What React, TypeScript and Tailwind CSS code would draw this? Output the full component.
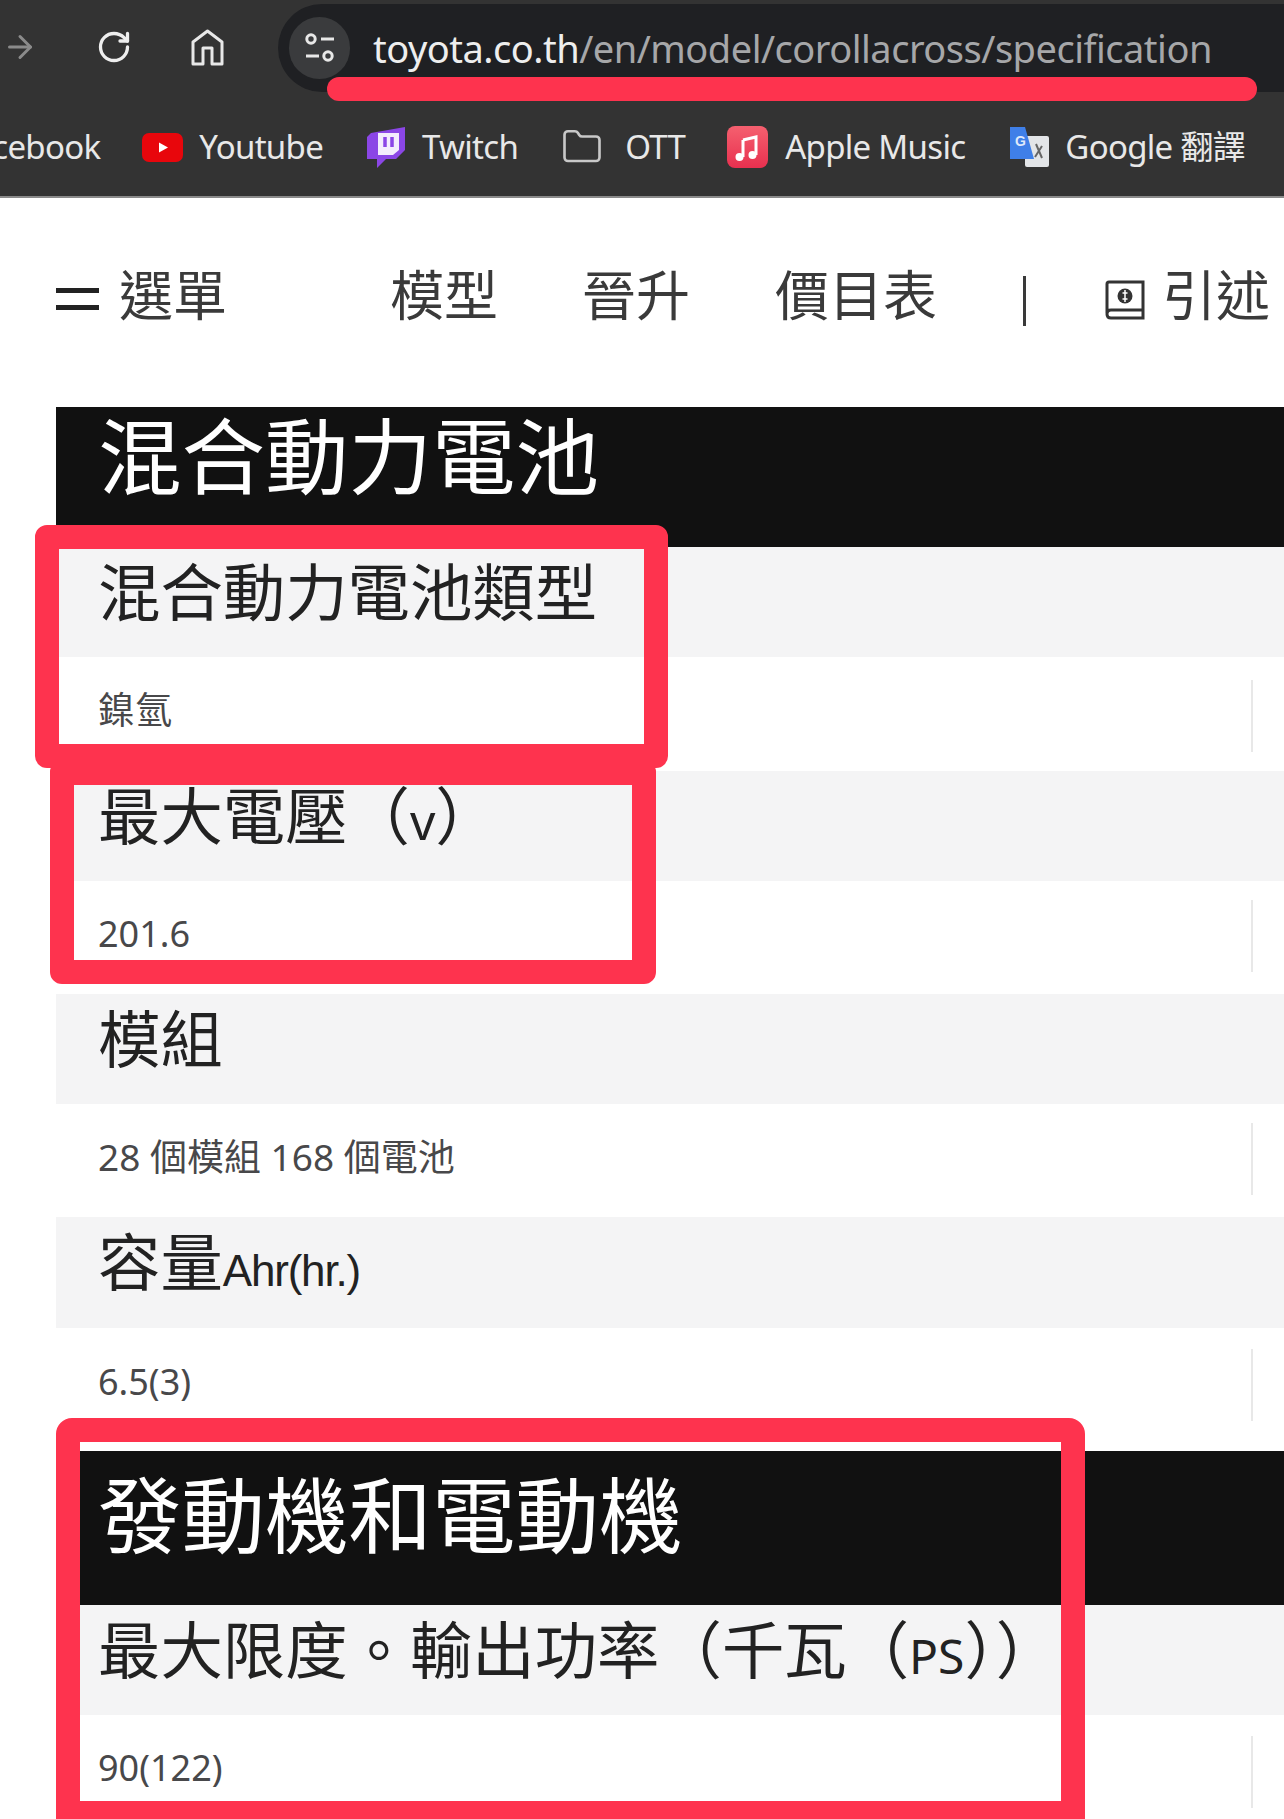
import React from "react";
import { ArrowRight, RotateCw, Folder } from "lucide-react";

const F = "[font-family:'Noto_Sans','Noto_Sans_CJK_TC',sans-serif]";

function Home() {
  return (
    <svg viewBox="0 0 33 37" className="w-[33px] h-[37px]" fill="none" stroke="#e8e8e8" strokeWidth="3">
      <path d="M2 35V13L16.5 2 31 13v22H21V19H12v16z" strokeLinejoin="round" />
    </svg>
  );
}

function Tune() {
  return (
    <svg viewBox="0 0 32 32" className="w-[32px] h-[32px]" fill="none" stroke="#e8e8e8" strokeWidth="3">
      <circle cx="7" cy="7" r="4.2" />
      <path d="M17 7h13M2 24h13" />
      <circle cx="24" cy="24" r="4.2" />
    </svg>
  );
}

function YouTubeIcon() {
  return (
    <svg viewBox="0 0 41 29" className="w-[41px] h-[29px] ml-[42px] mr-[16px]">
      <rect width="41" height="29" rx="7" fill="#e8060c" />
      <path d="M17 9.5l9 5-9 5z" fill="#fff" />
    </svg>
  );
}

function TwitchIcon() {
  return (
    <svg viewBox="0 0 38 41" className="w-[38px] h-[41px] ml-[44px] mr-[17px]">
      <path d="M4 6L38 0v23l-9 9H19l-9 9v-9H0V10z" fill="#8b46e6" />
      <path d="M11 6h21v17l-6 5H11z" fill="#f3ecfd" />
      <path d="M18 10v10M25 10v10" stroke="#8b46e6" strokeWidth="3.5" />
    </svg>
  );
}

function AppleMusicIcon() {
  return (
    <svg viewBox="0 0 41 42" className="w-[41px] h-[42px] ml-[42px] mr-[17px]">
      <defs>
        <linearGradient id="am" x1="0" y1="0" x2="0" y2="1">
          <stop offset="0" stopColor="#f5606f" />
          <stop offset="1" stopColor="#e8304f" />
        </linearGradient>
      </defs>
      <rect width="41" height="42" rx="8" fill="url(#am)" />
      <path d="M16 14l13-3v18M16 14v17" fill="none" stroke="#fff" strokeWidth="3" />
      <circle cx="12.5" cy="31" r="4" fill="#fff" />
      <circle cx="25.5" cy="29" r="4" fill="#fff" />
    </svg>
  );
}

function TranslateIcon() {
  return (
    <svg viewBox="0 0 40 40" className="w-[40px] h-[40px] ml-[44px] mr-[16px]">
      <rect x="16" y="9" width="24" height="31" rx="2" fill="#e3e5e8" />
      <path d="M1 0h15l9 32H1z" fill="#3f7fe8" />
      <text x="6" y="19" fontSize="14" fontWeight="700" fill="#dfe9fb" fontFamily="Liberation Sans">G</text>
      <path d="M27 17l6 14M33 19l-7 11" stroke="#666" strokeWidth="2" />
    </svg>
  );
}

function BookIcon() {
  return (
    <svg viewBox="0 0 42 40" className="w-[42px] h-[42px]" fill="none" stroke="#333" strokeWidth="3">
      <path d="M3 33V4q0-2 2-2h34v28H7q-4 0-4 4t4 4h32v-8" />
      <circle cx="21" cy="16" r="7.5" fill="#333" stroke="none" />
      <path d="M21 10v12M18.500 13h5M18.500 19h5" stroke="#fff" strokeWidth="1.5" />
    </svg>
  );
}

function Head({ children, h, pt }: { children: React.ReactNode; h: string; pt: string }) {
  return (
    <div className={`bg-[#111111] text-white text-[83.5px] leading-[98px] pl-[42px] ${h} ${pt}`}>
      {children}
    </div>
  );
}

function Label({ children, cls = "h-[110px]" }: { children: React.ReactNode; cls?: string }) {
  return (
    <div className={`bg-[#f4f4f5] text-[#222222] text-[62.4px] leading-[84px] pl-[42px] pt-[3px] whitespace-nowrap ${cls}`}>
      {children}
    </div>
  );
}

function Value({
  children,
  h,
  tm,
  sm,
  size = "text-[36px]",
}: {
  children: React.ReactNode;
  h: string;
  tm: string;
  sm: string;
  size?: string;
}) {
  return (
    <div className={`bg-white text-[#48484a] leading-[48px] pl-[42px] pr-[31px] flex items-start justify-between ${size} ${h}`}>
      <span className={`whitespace-nowrap ${tm}`}>{children}</span>
      <span className={`w-[2px] h-[72px] bg-[#e8e8e8] ${sm}`} />
    </div>
  );
}

function Mark({ cls }: { cls: string }) {
  return <div className={`absolute border-[#fe334e] ${cls}`} />;
}

export default function App() {
  return (
    <div className={`relative w-[1284px] h-[1819px] overflow-hidden bg-white ${F}`}>
      <div className="h-[198px] bg-[#333333] border-b-2 border-[#8a8a8a]">
        <div className="h-[96px] flex">
          <div className="w-[278px] h-[96px] flex items-center pb-[2px]">
            <ArrowRight className="w-[36px] h-[36px] ml-[2px] text-[#8b8b8b]" strokeWidth={2} />
            <RotateCw className="w-[36px] h-[36px] ml-[58px] text-[#eeeeee]" strokeWidth={2.2} />
            <span className="ml-[59px]"><Home /></span>
          </div>
          <div className="flex-1 h-[88px] mt-[4px] bg-[#1f2023] rounded-l-[44px] flex items-center pl-[11px]">
            <div className="w-[61px] h-[62px] rounded-full bg-[#3a3b3d] flex items-center justify-center">
              <Tune />
            </div>
            <div className="ml-[23px] text-[38px] leading-[52px] tracking-[-0.5px] text-[#a6a7a9] whitespace-nowrap">
              <span className="text-[#eeeeee]">toyota.co.th</span>/en/model/corollacross/specification
            </div>
          </div>
        </div>
        <div className="h-[100px] flex items-center pt-[2px] text-[#e8e8e8] text-[33px] leading-[44px] tracking-[-0.7px] whitespace-nowrap -ml-[42px]">
          <span>Facebook</span>
          <YouTubeIcon />
          <span>Youtube</span>
          <TwitchIcon />
          <span>Twitch</span>
          <Folder className="w-[46px] h-[42px] ml-[41px] mr-[20px] text-[#c8c8c8]" strokeWidth={1.5} />
          <span>OTT</span>
          <AppleMusicIcon />
          <span>Apple Music</span>
          <TranslateIcon />
          <span>Google 翻譯</span>
        </div>
      </div>

      <div className="h-[209px] flex items-center text-[#3a3a3a] text-[54px] leading-[70px] pb-[16px] pl-[56px] whitespace-nowrap">
        <div className="w-[43px] h-[22px] mt-[8px] flex flex-col justify-between">
          <div className="h-[5px] bg-[#222222]" />
          <div className="h-[5px] bg-[#222222]" />
        </div>
        <span className="ml-[20px]">選單</span>
        <span className="ml-[163px]">模型</span>
        <span className="ml-[84px]">晉升</span>
        <span className="ml-[85px]">價目表</span>
        <span className="ml-[86px] w-[3px] h-[50px] mt-[12px] bg-[#3a3a3a]" />
        <span className="ml-[78px] mt-[11px]"><BookIcon /></span>
        <span className="ml-[16px]">引述</span>
      </div>

      <div className="ml-[56px]">
        <Head h="h-[140px]" pt="pt-[0px]">混合動力電池</Head>
        <Label>混合動力電池類型</Label>
        <Value h="h-[114px]" tm="mt-[29px]" sm="mt-[23px]" size="text-[37px]">鎳氫</Value>
        <Label>最大電壓（<span className="text-[50px]">v</span>）</Label>
        <Value h="h-[113px]" tm="mt-[29px]" sm="mt-[19px]">201.6</Value>
        <Label>模組</Label>
        <Value h="h-[113px]" tm="mt-[29px]" sm="mt-[19px]" size="text-[37px]">28 個模組 168 個電池</Value>
        <Label cls="h-[111px]">
          容量<span className="text-[44px] tracking-[-1.2px] [font-family:'Liberation_Sans',sans-serif]">Ahr(hr.)</span>
        </Label>
        <Value h="h-[123px]" tm="mt-[30px]" sm="mt-[21px]">6.5(3)</Value>
        <Head h="h-[154px]" pt="pt-[15px]">發動機和電動機</Head>
        <Label>
          最大限度。輸出功率（千瓦（<span className="text-[48px]">PS</span>））
        </Label>
        <Value h="h-[103px]" tm="mt-[29px]" sm="mt-[21px]">90(122)</Value>
      </div>

      <Mark cls="left-[50px] top-[760px] w-[606px] h-[224px] border-x-[24px] border-t-[25px] border-b-[24px] rounded-[12px]" />
      <Mark cls="left-[35px] top-[525px] w-[633px] h-[243px] border-[24px] rounded-[12px]" />
      <Mark cls="left-[56px] top-[1418px] w-[1029px] h-[420px] border-x-[24px] border-t-[24px] border-b-[37px] rounded-[16px]" />
      <div className="absolute left-[327px] top-[77px] w-[930px] h-[24px] rounded-full bg-[#fe334e]" />
    </div>
  );
}
